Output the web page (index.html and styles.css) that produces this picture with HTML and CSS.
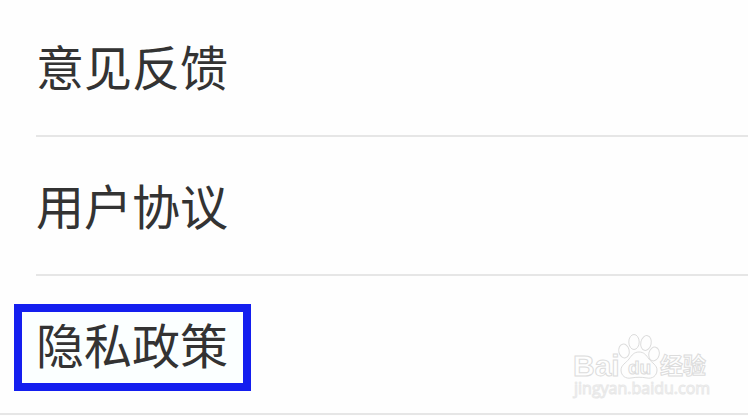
FILE: index.html
```
<!DOCTYPE html>
<html lang="zh-CN">
<head>
  <meta charset="UTF-8">
  <meta name="viewport" content="width=device-width, initial-scale=1.0">
  <title>设置</title>
  <link rel="stylesheet" href="styles.css">
</head>
<body>

  <nav class="settings">
    <a class="item" href="#feedback"><span class="label">意见反馈</span></a>
    <a class="item" href="#agreement"><span class="label">用户协议</span></a>
    <a class="item last" href="#privacy"><span class="label highlight">隐私政策</span></a>
  </nav>

  <svg class="watermark" width="160" height="82" viewBox="0 0 160 82">
    <text class="brand" x="13" y="51">Bai</text>
    <g class="paw">
      <ellipse cx="64" cy="26" rx="5.2" ry="7" transform="rotate(-12 64 26)"/>
      <ellipse cx="74" cy="17" rx="5.2" ry="7.5"/>
      <ellipse cx="86" cy="18" rx="5.2" ry="7.5" transform="rotate(12 86 18)"/>
      <ellipse cx="94" cy="29" rx="5.2" ry="7" transform="rotate(14 94 29)"/>
      <path d="M79 27C84 27 86 30 89 34C92 38 97 40 97 45C97 51 92 54 87 53C81 52 77 52 71 53C66 54 61 51 61 45C61 40 66 38 69 34C72 30 74 27 79 27Z"/>
    </g>
    <text class="du" x="68" y="49">du</text>
    <text class="brand-cn" x="100" y="49">经验</text>
    <text class="site" x="14" y="69">jingyan.baidu.com</text>
  </svg>

</body>
</html>
```

FILE: styles.css
```
* {
  box-sizing: border-box;
}

body {
  margin: 0;
  position: relative;
  background-color: #fefefe;
  color: #333;
  font-family: 'Noto Sans CJK SC', sans-serif;
}

.item {
  display: block;
  margin-left: 36px;
  padding: 31px 0 34px;
  border-bottom: 2px solid #e6e6e6;
  color: inherit;
  font-size: 48px;
  line-height: 72px;
  text-decoration: none;
}

.item:first-child {
  padding-top: 29px;
}

.item.last {
  margin-left: 0;
  padding-left: 36px;
}

.label {
  display: inline-block;
  vertical-align: top;
}

.highlight {
  position: relative;
}

/* marker frame around the chosen entry */
.highlight::before {
  content: '';
  position: absolute;
  z-index: -1;
  inset: -3px -23px -12px -22px;
  border: 8px solid #141eef;
  background-color: #fbffff;
}

.watermark {
  position: absolute;
  right: 28px;
  bottom: 8px;
}

.watermark text,
.paw {
  fill: #fefefe;
  stroke: #dcdcdc;
  stroke-width: 1px;
}

.brand {
  font: bold 30px 'Liberation Sans', sans-serif;
}

.du {
  font: bold 19px 'Liberation Sans', sans-serif;
}

.brand-cn {
  font: bold 23px 'Noto Sans CJK SC', sans-serif;
}

.watermark .site {
  font: 16px 'Open Sans', sans-serif;
  stroke: #e8e8e8;
}
```
